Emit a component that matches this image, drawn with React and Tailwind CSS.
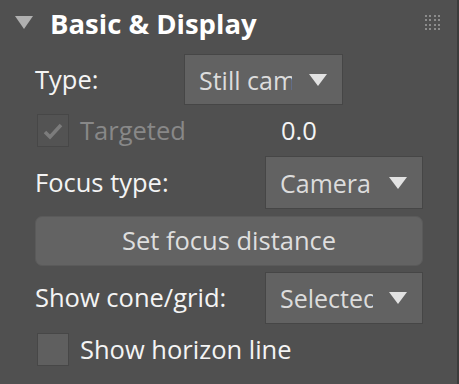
import React from "react";

const font = { fontFamily: '"Open Sans", "Noto Sans", sans-serif' };

function Caret() {
  return (
    <svg width="18" height="12" viewBox="0 0 18 12" className="ml-auto shrink-0">
      <polygon points="0,0 18,0 9,12" fill="#e2e2e2" />
    </svg>
  );
}

function Dropdown({ text, className }) {
  return (
    <div
      className={
        "flex items-center border border-[#464646] bg-[#626262] pl-[14px] pr-[15px] " +
        className
      }
    >
      <div className="w-[93px] overflow-hidden whitespace-nowrap text-[25px] leading-[30px] text-[#dcdcdc]">
        {text}
      </div>
      <Caret />
    </div>
  );
}

export default function App() {
  return (
    <div
      className="relative h-[384px] w-[459px] overflow-hidden border-r-2 border-[#3c3c3c] bg-[#505050]"
      style={font}
    >
      {/* header */}
      <div className="flex h-[46px] items-start pl-[15px] pt-[6px]">
        <svg width="18" height="13" viewBox="0 0 18 13" className="mt-[10px] shrink-0">
          <polygon points="0,0 18,0 9,13" fill="#b0b0b0" />
        </svg>
        <div className="ml-[17px] text-[27.5px] font-bold leading-[36px] text-white">
          Basic &amp; Display
        </div>
        <div className="ml-auto mr-[17px] mt-[9px] grid grid-cols-4 gap-[2.4px]">
          {Array.from({ length: 16 }).map((_, i) => (
            <div key={i} className="h-[2px] w-[2px] bg-[#8c8c8c]" />
          ))}
        </div>
      </div>

      <div className="flex flex-col pl-[35px] pr-[34px]">
        {/* Type */}
        <div className="mt-[8px] flex h-[51px] items-center">
          <div className="w-[149px] text-[25.5px] leading-none text-[#f4f4f4]">Type:</div>
          <Dropdown text="Still camera" className="h-[51px] w-[159px]" />
        </div>

        {/* Targeted */}
        <div className="mt-[9px] flex h-[33px] items-center">
          <div className="ml-[2px] flex h-[33px] w-[32px] items-center justify-center border border-[#474747] bg-[#535353]">
            <svg width="20" height="18" viewBox="0 0 20 18">
              <path d="M2 10 L7 15 L18 3" stroke="#7c7c7c" strokeWidth="3.5" fill="none" />
            </svg>
          </div>
          <div className="ml-[11px] w-[201px] text-[25.5px] leading-none text-[#888888]">Targeted</div>
          <div className="text-[25.5px] leading-none text-[#f4f4f4]">0.0</div>
        </div>

        {/* Focus type */}
        <div className="mt-[9px] flex h-[53px] items-center">
          <div className="w-[230px] text-[25.5px] leading-none text-[#f4f4f4]">Focus type:</div>
          <Dropdown text="Camera" className="h-[53px] w-[158px]" />
        </div>

        {/* Button */}
        <div className="mt-[7px] flex h-[50px] w-[388px] items-center justify-center rounded-[7px] border border-[#5a5a5a] bg-[#636363] text-[25.5px] leading-none text-[#dedede]">
          Set focus distance
        </div>

        {/* Show cone/grid */}
        <div className="mt-[6px] flex h-[52px] items-center">
          <div className="w-[230px] text-[25.5px] leading-none text-[#f4f4f4]">Show cone/grid:</div>
          <Dropdown text="Selected" className="h-[52px] w-[158px]" />
        </div>

        {/* Show horizon line */}
        <div className="mt-[9px] flex h-[33px] items-center">
          <div className="ml-[2px] h-[33px] w-[32px] border border-[#474747] bg-[#5f5f5f]" />
          <div className="ml-[11px] text-[25.5px] leading-none text-[#f4f4f4]">Show horizon line</div>
        </div>
      </div>
    </div>
  );
}
